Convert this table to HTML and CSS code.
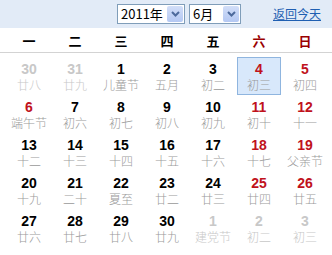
FILE: index.html
```html
<!DOCTYPE html>
<html lang="zh-CN">
<head>
<meta charset="utf-8">
<link rel="stylesheet" href="styles.css">
</head>
<body>
<div class="cal">
  <div class="head">
    <div class="sel sel-year"><span class="sel-text">2011年</span><span class="sel-btn"><svg width="9" height="6" viewBox="0 0 9 6"><path d="M1 1 L4.5 4.5 L8 1" fill="none" stroke="#4d6a9c" stroke-width="2"/></svg></span></div>
    <div class="sel sel-month"><span class="sel-text">6月</span><span class="sel-btn"><svg width="9" height="6" viewBox="0 0 9 6"><path d="M1 1 L4.5 4.5 L8 1" fill="none" stroke="#4d6a9c" stroke-width="2"/></svg></span></div>
    <a class="today" href="#">返回今天</a>
  </div>
  <div class="weekdays">
    <span>一</span><span>二</span><span>三</span><span>四</span><span>五</span><span class="wk">六</span><span class="wk">日</span>
  </div>
  <div class="grid">
    <div class="cell other"><b>30</b><i>廿八</i></div>
    <div class="cell other"><b>31</b><i>廿九</i></div>
    <div class="cell"><b>1</b><i>儿童节</i></div>
    <div class="cell"><b>2</b><i>五月</i></div>
    <div class="cell"><b>3</b><i>初二</i></div>
    <div class="cell red today-cell"><b>4</b><i>初三</i></div>
    <div class="cell red"><b>5</b><i>初四</i></div>

    <div class="cell red"><b>6</b><i>端午节</i></div>
    <div class="cell"><b>7</b><i>初六</i></div>
    <div class="cell"><b>8</b><i>初七</i></div>
    <div class="cell"><b>9</b><i>初八</i></div>
    <div class="cell"><b>10</b><i>初九</i></div>
    <div class="cell red"><b>11</b><i>初十</i></div>
    <div class="cell red"><b>12</b><i>十一</i></div>

    <div class="cell"><b>13</b><i>十二</i></div>
    <div class="cell"><b>14</b><i>十三</i></div>
    <div class="cell"><b>15</b><i>十四</i></div>
    <div class="cell"><b>16</b><i>十五</i></div>
    <div class="cell"><b>17</b><i>十六</i></div>
    <div class="cell red"><b>18</b><i>十七</i></div>
    <div class="cell red"><b>19</b><i>父亲节</i></div>

    <div class="cell"><b>20</b><i>十九</i></div>
    <div class="cell"><b>21</b><i>二十</i></div>
    <div class="cell"><b>22</b><i>夏至</i></div>
    <div class="cell"><b>23</b><i>廿二</i></div>
    <div class="cell"><b>24</b><i>廿三</i></div>
    <div class="cell red"><b>25</b><i>廿四</i></div>
    <div class="cell red"><b>26</b><i>廿五</i></div>

    <div class="cell"><b>27</b><i>廿六</i></div>
    <div class="cell"><b>28</b><i>廿七</i></div>
    <div class="cell"><b>29</b><i>廿八</i></div>
    <div class="cell"><b>30</b><i>廿九</i></div>
    <div class="cell other"><b>1</b><i>建党节</i></div>
    <div class="cell other"><b>2</b><i>初二</i></div>
    <div class="cell other"><b>3</b><i>初三</i></div>
  </div>
</div>
</body>
</html>
```

FILE: styles.css
```css
html, body {
  margin: 0;
  padding: 0;
  background: #fff;
}
.cal {
  width: 332px;
  height: 255px;
  font-family: "Liberation Sans", "Noto Sans CJK SC", sans-serif;
  overflow: hidden;
}
.head {
  height: 28px;
  background: #e2ebf7;
  display: flex;
  align-items: center;
  padding-left: 117px;
  box-sizing: border-box;
}
.sel {
  height: 20px;
  box-sizing: border-box;
  border: 1px solid #7f9db9;
  background: #fff;
  display: flex;
  align-items: stretch;
  font-family: "Noto Sans CJK SC", sans-serif;
  font-size: 13px;
  color: #000;
}
.sel-year { width: 68px; }
.sel-month { width: 52px; margin-left: 4px; }
.sel-text {
  flex: 1;
  line-height: 18px;
  padding-left: 3px;
}
.sel-btn {
  width: 16px;
  margin: 1px;
  background: linear-gradient(#d2def8, #b4c8f3);
  border-radius: 2px;
  display: flex;
  align-items: center;
  justify-content: center;
}
.today {
  margin-left: 32px;
  font-family: "Noto Sans CJK SC", sans-serif;
  font-size: 12px;
  color: #1f5fb2;
  text-decoration: underline;
  line-height: 18px;
}
.weekdays {
  height: 24px;
  border-bottom: 1px solid #d3d3d3;
  display: grid;
  grid-template-columns: repeat(7, 46px);
  padding-left: 6px;
  align-items: center;
  font-family: "Noto Sans CJK SC", sans-serif;
  font-weight: bold;
  font-size: 13px;
  color: #000;
}
.weekdays span { text-align: center; }
.weekdays .wk { color: #990000; }
.grid {
  display: grid;
  grid-template-columns: repeat(7, 46px);
  grid-auto-rows: 38px;
  padding-left: 6px;
  padding-top: 4px;
}
.cell {
  margin: 0 1px;
  display: flex;
  flex-direction: column;
  align-items: center;
  justify-content: center;
  box-sizing: border-box;
  border: 1px solid transparent;
}
.cell b {
  font-family: "Liberation Sans", sans-serif;
  font-weight: bold;
  font-size: 14px;
  line-height: 16px;
  color: #000;
}
.cell i {
  font-style: normal;
  font-family: "Noto Sans CJK SC", sans-serif;
  font-weight: 300;
  font-size: 12px;
  line-height: 15px;
  color: #9a9a9a;
}
.cell.red b { color: #c0121c; }
.cell.other b { color: #c8c8c8; }
.cell.other i { color: #c8c8c8; }
.today-cell {
  background: #d8e8fb;
  border-color: #8fb5df;
}
```
